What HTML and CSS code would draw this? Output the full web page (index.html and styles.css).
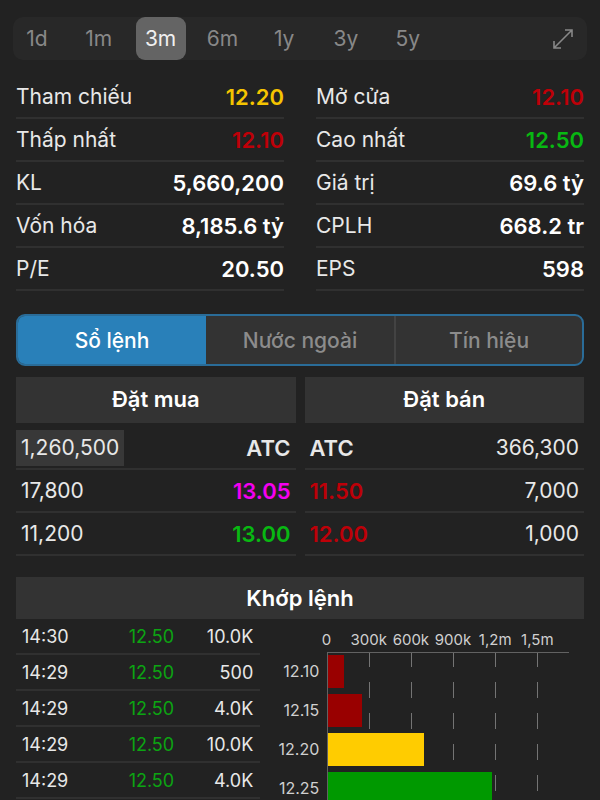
FILE: index.html
```html
<!DOCTYPE html>
<html lang="vi">

<head>
    <meta charset="UTF-8">
    <meta name="viewport" content="width=device-width, initial-scale=1">
    <title>Sổ lệnh</title>
    <link rel="stylesheet" href="styles.css">
</head>

<body>
    <main class="screen">
        <div class="toolbar">
            <div class="ranges">
                <button type="button" class="range">1d</button>
                <button type="button" class="range">1m</button>
                <button type="button" class="range active">3m</button>
                <button type="button" class="range">6m</button>
                <button type="button" class="range">1y</button>
                <button type="button" class="range">3y</button>
                <button type="button" class="range">5y</button>
            </div>
            <button type="button" class="expand" aria-label="Toàn màn hình">
                <svg viewBox="0 0 22 22" width="22" height="22" fill="none" stroke="currentColor" stroke-width="1.6">
                    <path d="M2 20L20 2M13 2H20V9M2 13V20H9" />
                </svg>
            </button>
        </div>

        <div class="stats">
            <table class="stat">
                <tr><th scope="row">Tham chiếu</th><td class="yellow">12.20</td></tr>
                <tr><th scope="row">Thấp nhất</th><td class="red">12.10</td></tr>
                <tr><th scope="row">KL</th><td>5,660,200</td></tr>
                <tr><th scope="row">Vốn hóa</th><td>8,185.6 tỷ</td></tr>
                <tr><th scope="row">P/E</th><td>20.50</td></tr>
            </table>
            <table class="stat">
                <tr><th scope="row">Mở cửa</th><td class="red">12.10</td></tr>
                <tr><th scope="row">Cao nhất</th><td class="green">12.50</td></tr>
                <tr><th scope="row">Giá trị</th><td>69.6 tỷ</td></tr>
                <tr><th scope="row">CPLH</th><td>668.2 tr</td></tr>
                <tr><th scope="row">EPS</th><td>598</td></tr>
            </table>
        </div>

        <div class="tabs">
            <button type="button" class="tab selected">Sổ lệnh</button>
            <button type="button" class="tab">Nước ngoài</button>
            <button type="button" class="tab">Tín hiệu</button>
        </div>

        <div class="book">
            <section>
                <h2 class="title">Đặt mua</h2>
                <table class="orders">
                    <tr><td class="big"><span class="volume">1,260,500</span></td><td class="price">ATC</td></tr>
                    <tr><td>17,800</td><td class="price purple">13.05</td></tr>
                    <tr><td>11,200</td><td class="price green">13.00</td></tr>
                </table>
            </section>
            <section>
                <h2 class="title">Đặt bán</h2>
                <table class="orders">
                    <tr><td class="price">ATC</td><td>366,300</td></tr>
                    <tr><td class="price red">11.50</td><td>7,000</td></tr>
                    <tr><td class="price red">12.00</td><td>1,000</td></tr>
                </table>
            </section>
        </div>

        <section class="matched">
            <h2 class="title small">Khớp lệnh</h2>
            <div class="matched_body">
                <table class="trades">
                    <tr><td>14:30</td><td class="match">12.50</td><td>10.0K</td></tr>
                    <tr><td>14:29</td><td class="match">12.50</td><td>500</td></tr>
                    <tr><td>14:29</td><td class="match">12.50</td><td>4.0K</td></tr>
                    <tr><td>14:29</td><td class="match">12.50</td><td>10.0K</td></tr>
                    <tr><td>14:29</td><td class="match">12.50</td><td>4.0K</td></tr>
                </table>
                <div class="chart">
                    <div class="axis">
                        <span>0</span><span>300k</span><span>600k</span><span>900k</span><span>1,2m</span><span>1,5m</span>
                    </div>
                    <div class="levels">
                        <span>12.10</span><span>12.15</span><span>12.20</span><span>12.25</span>
                    </div>
                    <div class="plot">
                        <div class="bar low" style="width: 6.6%"></div>
                        <div class="bar low" style="width: 14%"></div>
                        <div class="bar ref" style="width: 39.6%"></div>
                        <div class="bar high" style="width: 68%"></div>
                    </div>
                </div>
            </div>
        </section>
    </main>
</body>

</html>
```

FILE: styles.css
```css
* {
    box-sizing: border-box;
}

body {
    margin: 0;
    background-color: #222222;
    color: #e8e8e8;
    font-family: Inter, "Liberation Sans", sans-serif;
    font-size: 21px;
}

button {
    border: none;
    padding: 0;
    background: none;
    color: inherit;
    font: inherit;
}

table {
    width: 100%;
    border-spacing: 0;
}

th,
td {
    padding: 0;
    text-align: left;
    font-weight: 400;
    white-space: nowrap;
    border-bottom: 2px solid #303030;
}

.screen {
    height: 100vh;
    padding: 17px 16px 0;
    overflow-y: auto;
    scrollbar-width: none;
}

/* time ranges */
.toolbar {
    display: flex;
    justify-content: space-between;
    align-items: center;
    height: 43px;
    margin: 0 -3px;
    padding-right: 13px;
    border-radius: 10px;
    background-color: #282828;
    color: #888888;
}

.ranges {
    display: flex;
    justify-content: space-between;
    width: 75%;
    height: 100%;
    margin-left: -1px;
}

.range {
    width: 50px;
    border-radius: 9px;
}

.active {
    background-color: #646464;
    color: #f0f0f0;
}

.expand {
    display: flex;
}

/* key numbers */
.stats {
    display: grid;
    grid-template-columns: 1fr 1fr;
    gap: 32px;
    margin-top: 16px;
}

.stat tr {
    height: 43px;
}

.stat td {
    text-align: right;
    font-size: 22px;
    font-weight: 600;
    color: #ffffff;
}

.stat .yellow {
    color: #f5c400;
}

.stat .red,
.price.red {
    color: #be0008;
}

.stat .green,
.price.green {
    color: #08b812;
}

.price.purple {
    color: #f400f0;
}

/* tabs */
.tabs {
    display: grid;
    grid-template-columns: 1fr 1fr 1fr;
    height: 52px;
    margin-top: 23px;
    border: 2px solid #2a6c98;
    border-radius: 9px;
    background-color: #333333;
    color: #8c8c8c;
    font-weight: 500;
    overflow: hidden;
}

.tab + .tab {
    border-left: 2px solid #434343;
}

.tab.selected {
    background-color: #2980b9;
    color: #ffffff;
}

.tab.selected + .tab {
    border-left: none;
}

/* order book */
.book {
    display: grid;
    grid-template-columns: 1fr 1fr;
    gap: 9px;
    margin-top: 11px;
}

.title {
    margin: 0 0 4px;
    padding-bottom: 2px;
    background-color: #333333;
    color: #ffffff;
    font-size: 22px;
    font-weight: 600;
    line-height: 44px;
    text-align: center;
}

.title.small {
    margin: 0;
    padding: 0;
    line-height: 42px;
}

.orders tr {
    height: 43px;
}

.orders td {
    padding: 0 5px;
}

.orders td:last-child {
    text-align: right;
}

.orders .price {
    font-size: 22px;
    font-weight: 600;
}

.orders .big {
    padding: 0;
}

.volume {
    display: inline-block;
    padding: 0 5px;
    background-color: #383838;
    line-height: 36px;
}

/* matched orders */
.matched {
    margin-top: 21px;
}

.matched_body {
    display: grid;
    grid-template-columns: 43fr 57fr;
    align-items: start;
}

.trades {
    font-size: 18px;
}

.trades tr {
    height: 36px;
}

.trades td {
    text-align: right;
}

.trades td:first-child {
    padding-left: 6px;
    text-align: left;
}

.trades td:last-child {
    padding-right: 7px;
}

.trades .match {
    color: #0ca412;
}

.chart {
    display: grid;
    grid-template-columns: 59px 1fr;
    grid-template-rows: 33px auto;
    column-gap: 8px;
    padding-right: 15px;
    font-size: 15px;
    color: #d0d0d0;
}

.axis {
    grid-column: 2;
    display: flex;
    margin-left: -9%;
    line-height: 42px;
}

.axis span {
    display: flex;
    justify-content: center;
    flex: 0 0 16%;
}

.levels {
    display: flex;
    flex-direction: column;
    font-size: 16px;
    text-align: right;
    line-height: 39px;
}

/* dashed tick lines behind the bars */
.plot {
    display: flex;
    flex-direction: column;
    gap: 6px;
    padding-top: 2px;
    border-top: 1px solid #626262;
    border-left: 1px solid #626262;
    background:
        repeating-linear-gradient(to bottom, transparent 0 14px, #222222 14px 29px, transparent 29px 31px),
        repeating-linear-gradient(to right, transparent 0 17%, #747474 17% 17.4%);
}

.bar {
    height: 33px;
}

.bar.low {
    background-color: #990000;
}

.bar.ref {
    background-color: #ffcc00;
}

.bar.high {
    background-color: #009900;
}
```
